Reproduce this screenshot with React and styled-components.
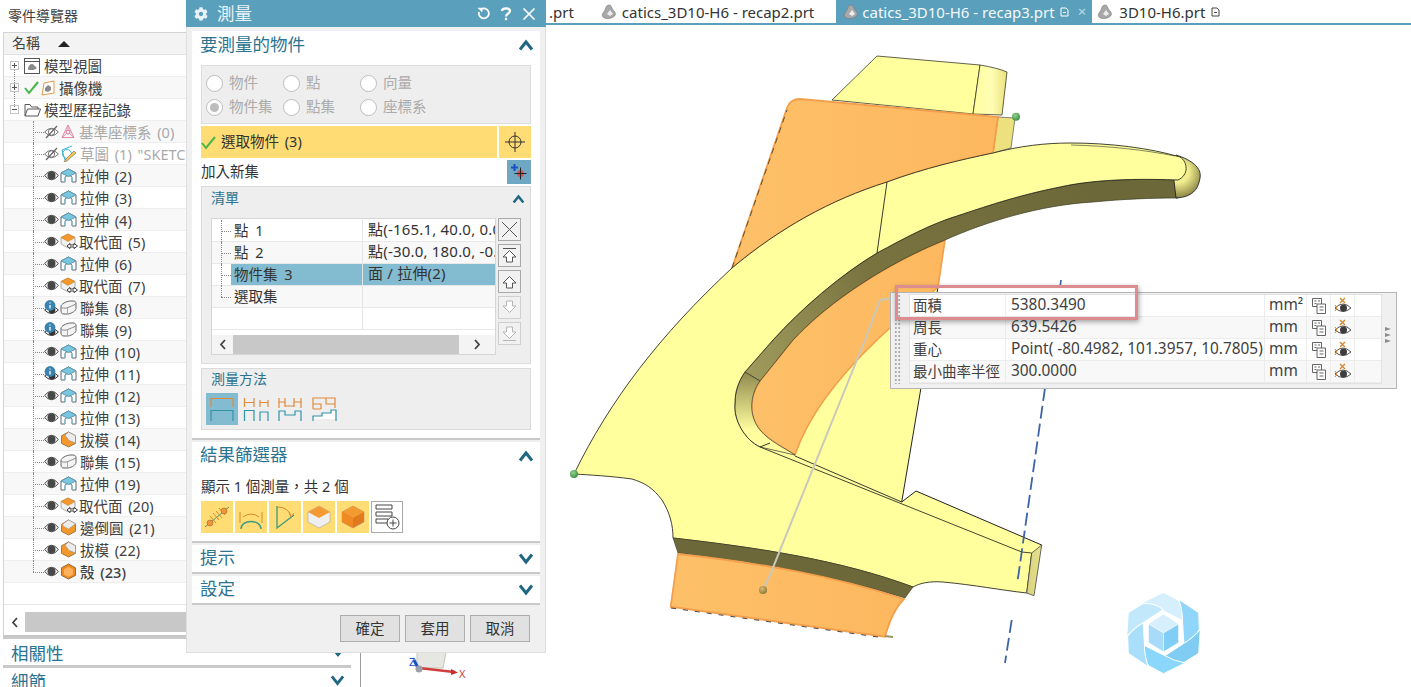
import React from 'react';
import styled, { createGlobalStyle } from 'styled-components';
import { FaCog } from 'react-icons/fa';

const TEAL = '#5a9fbc';
const HEAD = '#2b7390';
const SELECT = '#83bbd0';
const YELLOW = '#ffdc74';

const Global = createGlobalStyle`
  html, body { margin: 0; padding: 0; background: #fff; }
  body { font-family: "Noto Sans", "Noto Sans CJK TC", sans-serif; color: #404040; }
  * { box-sizing: border-box; }
`;

const Page = styled.div`
  position: relative;
  display: flex;
  width: 1411px;
  height: 687px;
  overflow: hidden;
  background: #fff;
`;

const Up = styled.span`
  display: block;
  padding-bottom: ${(p) => p.$by || 3}px;
`;

/* left navigator */
const Navigator = styled.div`
  display: flex;
  flex-direction: column;
  flex: none;
  width: 361px;
  height: 687px;
  overflow: hidden;
  border-right: 1px solid #9c9c9c;
`;
const NavTitle = styled.div`
  flex: none;
  height: 32px;
  padding-left: 8px;
  font-size: 14px;
  line-height: 31px;
`;
const TreePanel = styled.div`
  display: flex;
  flex-direction: column;
  flex: none;
  height: 604px;
  margin: 0 9px 0 3px;
  border: 1px solid #d4d4d4;
  border-bottom-color: #c4c4c4;
`;
const TreeHead = styled.div`
  display: flex;
  align-items: center;
  gap: 18px;
  flex: none;
  height: 22px;
  padding-left: 8px;
  font-size: 14px;
  background: #f3f3f3;
  border-bottom: 1px solid #e2e2e2;
`;
const SortUp = styled.span`
  width: 0;
  height: 0;
  border-left: 6px solid transparent;
  border-right: 6px solid transparent;
  border-bottom: 6px solid #222;
`;
const TreeRow = styled.div`
  display: flex;
  align-items: center;
  flex: none;
  height: 22px;
  padding-left: ${(p) => (p.$level ? 29 : 6)}px;
  font-size: 14.5px;
  word-spacing: 2px;
  white-space: nowrap;
  color: ${(p) => (p.$muted ? '#a9a9a9' : '#404040')};
  background: ${(p) => (p.$stripe ? '#f8f8f8' : '#fff')};
  border-bottom: 1px solid #eeeeee;
`;
const Connector = styled.span`
  position: relative;
  flex: none;
  align-self: stretch;
  width: ${(p) => p.$w || 11}px;
  &::before {
    content: '';
    position: absolute;
    left: 0;
    top: 0;
    bottom: ${(p) => (p.$last ? '50%' : '-1px')};
    border-left: 1px dotted #888;
  }
  &::after {
    content: '';
    position: absolute;
    left: 0;
    right: 0;
    top: 50%;
    border-top: 1px dotted #888;
  }
`;
const Expander = styled.span`
  position: relative;
  flex: none;
  width: 9px;
  height: 9px;
  margin-right: 5px;
  border: 1px solid #c4c4c4;
  background: linear-gradient(#555, #555) center / 5px 1px no-repeat,
    ${(p) => (p.$open ? 'none' : 'linear-gradient(#555, #555) center / 1px 5px no-repeat')};
  &::after {
    content: '';
    display: ${(p) => (p.$open ? 'none' : 'block')};
    position: absolute;
    left: 3px;
    top: 8px;
    height: 15px;
    border-left: 1px dotted #888;
  }
`;
const RowLabel = styled.span`
  margin-left: ${(p) => p.$gap ?? 4}px;
  padding-bottom: 1px;
  font-weight: ${(p) => (p.$bold ? 500 : 400)};
`;
const Spacer = styled.span`
  display: block;
  flex: none;
  width: ${(p) => p.$w}px;
  height: ${(p) => p.$h || 0}px;
`;
const EmptyRow = styled.div`
  flex: none;
  height: 22px;
  border-bottom: 1px solid #e8e8e8;
`;
const TreeScroll = styled.div`
  display: flex;
  align-items: stretch;
  flex: none;
  height: 20px;
  margin-top: 7px;
`;
const ScrollArrow = styled.span`
  display: flex;
  align-items: center;
  justify-content: center;
  flex: none;
  width: ${(p) => p.$w || 21}px;
  color: #444;
`;
const ScrollThumb = styled.span`
  flex: ${(p) => (p.$fill ? 1 : 'none')};
  width: ${(p) => p.$w || 0}px;
  background: #c8c8c8;
`;
const AccordionBar = styled.div`
  display: flex;
  align-items: center;
  justify-content: space-between;
  flex: none;
  height: ${(p) => p.$h}px;
  margin: 0 9px 0 3px;
  padding: 0 6px 0 8px;
  font-size: 17.5px;
  color: ${HEAD};
  border-top: 3px solid #c9c9c9;
`;

/* main area */
const Main = styled.div`
  display: flex;
  flex-direction: column;
  flex: 1;
  min-width: 0;
`;
const TabBar = styled.div`
  display: flex;
  align-items: stretch;
  flex: none;
  height: 25px;
  padding-left: 185px;
  font-size: 15px;
  border-bottom: 2px solid ${TEAL};
  white-space: nowrap;
`;
const Tab = styled.div`
  display: flex;
  align-items: center;
  gap: ${(p) => p.$gap ?? 6}px;
  padding: ${(p) => p.$pad};
  color: ${(p) => (p.$active ? '#f4f9fb' : '#333')};
  background: ${(p) => (p.$active ? TEAL : 'transparent')};
`;
const TabClose = styled.span`
  margin-left: 4px;
  font-size: 15px;
  line-height: 1;
  color: #b9dbe8;
`;
const Canvas = styled.div`
  position: relative;
  flex: 1;
`;
const ModelSvg = styled.svg`
  display: block;
`;

/* dialog */
const Dialog = styled.div`
  position: absolute;
  left: 186px;
  top: 0;
  display: flex;
  flex-direction: column;
  width: 360px;
  height: 653px;
  background: #f0f0f0;
  border: 1px solid #dedede;
  border-top: 0;
`;
const DialogTitle = styled.div`
  display: flex;
  align-items: center;
  flex: none;
  height: 27px;
  margin: 0 -1px;
  padding: 0 8px;
  color: #e9f3f7;
  background: ${TEAL};
`;
const TitleText = styled.span`
  flex: 1;
  margin-left: 9px;
  padding-bottom: 3px;
  font-size: 17.5px;
`;
const TitleIcons = styled.span`
  display: flex;
  align-items: center;
  gap: 9px;
  padding-right: 2px;
`;
const DialogBody = styled.div`
  display: flex;
  flex-direction: column;
  gap: 2px;
  padding: 4px 5px 0;
`;
const Section = styled.section`
  background: #fff;
  border-bottom: 2px solid #c9c9c9;
`;
const SectionHead = styled.div`
  display: flex;
  align-items: center;
  justify-content: space-between;
  height: ${(p) => p.$h || 27}px;
  padding: 0 6px 0 8px;
  font-size: 17.5px;
  color: ${HEAD};
`;
const SectionBody = styled.div`
  display: flex;
  flex-direction: column;
  gap: 2px;
  padding: ${(p) => p.$pad};
`;
const Group = styled.div`
  background: #eeeeee;
  border: 1px solid #dcdcdc;
  margin-top: ${(p) => p.$mt || 0}px;
`;
const RadioGrid = styled.div`
  display: grid;
  grid-template-columns: repeat(3, 77px);
  grid-auto-rows: 24px;
  align-items: center;
  height: 57px;
  padding: 5px 0 0 4px;
`;
const RadioItem = styled.label`
  display: flex;
  align-items: center;
  gap: 6px;
  font-size: 14.5px;
  color: #ababab;
`;
const RadioDot = styled.span`
  display: flex;
  align-items: center;
  justify-content: center;
  width: 17px;
  height: 17px;
  border-radius: 50%;
  background: #fff;
  border: 1px solid #bdbdbd;
  &::after {
    content: '';
    display: ${(p) => (p.$on ? 'block' : 'none')};
    width: 9px;
    height: 9px;
    border-radius: 50%;
    background: #bdbdbd;
  }
`;
const SelectRow = styled.div`
  display: flex;
  gap: 2px;
  height: 32px;
`;
const SelectBar = styled.div`
  display: flex;
  align-items: center;
  flex: 1;
  gap: 5px;
  font-size: 14.5px;
  word-spacing: 2px;
  color: #333;
  background: ${YELLOW};
`;
const SelectButton = styled.div`
  display: flex;
  align-items: center;
  justify-content: center;
  width: 32px;
  background: ${YELLOW};
`;
const NewSetRow = styled.div`
  display: flex;
  align-items: center;
  justify-content: space-between;
  height: 24px;
  font-size: 14.5px;
  color: #333;
`;
const NewSetButton = styled.div`
  display: flex;
  align-items: center;
  justify-content: center;
  width: 24px;
  height: 24px;
  background: #6fa8c2;
`;
const ListHead = styled.div`
  display: flex;
  align-items: center;
  justify-content: space-between;
  height: 23px;
  padding: 0 5px 0 9px;
  font-size: 14px;
  color: ${HEAD};
`;
const ListWrap = styled.div`
  display: flex;
  gap: 2px;
  height: 153px;
  padding: 8px 0 0 9px;
`;
const ListTable = styled.div`
  display: flex;
  flex-direction: column;
  width: 285px;
  height: 137px;
  background: #fff;
  border: 1px solid #d6d6d6;
  overflow: hidden;
`;
const ListRows = styled.div`
  flex: 1;
  overflow: hidden;
  padding-top: 1px;
`;
const ListRow = styled.div`
  display: flex;
  height: 22px;
  font-size: 14.5px;
  color: #333;
  background: ${(p) => (p.$stripe ? '#f8f8f8' : '#fff')};
  border-bottom: 1px solid #e8e8e8;
`;
const NameCell = styled.div`
  display: flex;
  flex: none;
  align-items: center;
  width: 150px;
  padding-left: 9px;
`;
const NameText = styled.span`
  flex: 1;
  align-self: stretch;
  display: flex;
  align-items: center;
  padding: 0 0 2px 3px;
  word-spacing: 3px;
  background: ${(p) => (p.$sel ? SELECT : 'transparent')};
`;
const ValueCell = styled.div`
  flex: 1;
  min-width: 0;
  padding-left: 5px;
  font-size: 15px;
  letter-spacing: 0.2px;
  line-height: 19px;
  overflow: hidden;
  white-space: nowrap;
  border-left: 1px solid #e4e4e4;
  background: ${(p) => (p.$sel ? SELECT : 'transparent')};
`;
const ListScroll = styled.div`
  display: flex;
  flex: none;
  height: 19px;
  background: #f4f4f4;
`;
const ToolColumn = styled.div`
  display: flex;
  flex-direction: column;
  gap: 3px;
`;
const ToolButton = styled.div`
  display: flex;
  align-items: center;
  justify-content: center;
  width: 23px;
  height: 23px;
  background: #f1f1f1;
  border: 1px solid ${(p) => (p.$off ? '#cfcfcf' : '#a9a9a9')};
`;
const MethodLabel = styled.div`
  padding-left: 9px;
  height: 24px;
  font-size: 14px;
  line-height: 20px;
  color: ${HEAD};
`;
const IconRow = styled.div`
  display: flex;
  gap: ${(p) => p.$gap}px;
  padding-left: ${(p) => p.$pl || 0}px;
`;
const IconCell = styled.div`
  display: flex;
  align-items: center;
  justify-content: center;
  width: 32px;
  height: 32px;
  background: ${(p) => p.$bg || 'transparent'};
  border: ${(p) => (p.$outlined ? '1px solid #a9a9a9' : '0')};
`;
const CountText = styled.div`
  height: 30px;
  padding-top: 7px;
  font-size: 14.5px;
  color: #333;
  line-height: 20px;
`;
const DialogFooter = styled.div`
  display: flex;
  justify-content: flex-end;
  gap: 5px;
  padding: 10px 15px 0 0;
`;
const FooterButton = styled.button`
  width: 60px;
  height: 27px;
  padding: 0 0 3px;
  font: inherit;
  font-size: 14.5px;
  color: #333;
  background: #e1e1e1;
  border: 1px solid #adadad;
`;

/* floating results */
const ResultPanel = styled.div`
  position: absolute;
  left: 890px;
  top: 292px;
  display: flex;
  width: 507px;
  height: 97px;
  padding: 1px 0 0 3px;
  background: #f0f0f0;
  border: 1px solid #b5b5b5;
`;
const Grip = styled.div`
  width: 7px;
  height: 90px;
  margin-right: 8px;
  background: radial-gradient(circle, #a9a9a9 1px, transparent 1.2px) 0 0 / 3.5px 4px;
`;
const ResultTable = styled.div`
  width: 473px;
  height: 90px;
  background: #fff;
  border: 1px solid #e2e2e2;
`;
const ResultRow = styled.div`
  display: grid;
  grid-template-columns: 96px 259px 42px 24px 24px 1fr;
  height: 22px;
  font-size: 15.4px;
  line-height: 19px;
  color: #404040;
  background: ${(p) => (p.$stripe ? '#f8f8f8' : '#fff')};
  border-bottom: 1px solid #ececec;
`;
const ResultCell = styled.div`
  display: flex;
  align-items: center;
  padding-left: ${(p) => p.$pl ?? 0}px;
  justify-content: ${(p) => (p.$center ? 'center' : 'flex-start')};
  border-right: 1px solid #ececec;
  white-space: nowrap;
  overflow: hidden;
`;
const NameLabel = styled.span`
  font-size: 14.5px;
`;
const MoreMarks = styled.div`
  display: flex;
  flex-direction: column;
  gap: 2px;
  margin: 33px 0 0 3px;
`;
const MoreMark = styled.span`
  width: 0;
  height: 0;
  border-top: 2px solid transparent;
  border-bottom: 2px solid transparent;
  border-left: 6px solid #8c8c8c;
`;
const Highlight = styled.div`
  position: absolute;
  left: 895px;
  top: 285px;
  width: 243px;
  height: 35px;
  border: 3px solid #dd8c90;
  box-shadow: 1px 2px 5px rgba(60, 60, 60, 0.45), inset 0 0 1px rgba(60, 60, 60, 0.25);
`;

/* drawn glyphs */
const Eye = ({ color = '#474747' }) => (
  <svg width="15" height="13" viewBox="0 0 15 13">
    <path d="M.6 6.5Q7.5-2 14.4 6.5 7.5 15 .6 6.5Z" fill="#fff" stroke={color} />
    <circle cx="7.5" cy="6.5" r="4" fill={color} />
  </svg>
);
const HiddenEye = () => (
  <svg width="15" height="14" viewBox="0 0 15 14">
    <path d="M.6 7Q7.5-.5 14.4 7 7.5 14.5.6 7Z" fill="#fff" stroke="#777" />
    <circle cx="7.5" cy="7" r="3.2" fill="none" stroke="#777" />
    <path d="M2 13 13 1" stroke="#666" strokeWidth="1.2" />
  </svg>
);
const InfoEye = () => (
  <svg width="15" height="16" viewBox="0 0 15 16">
    <path d="M.6 10Q7.5 3 14.4 10 7.5 17 .6 10Z" fill="#fff" stroke="#333" />
    <circle cx="8" cy="10" r="3.4" fill="#333" />
    <circle cx="6" cy="5.5" r="5.4" fill="#3a83ad" />
    <path d="M6 2.6v.9M6 5v3.4" stroke="#fff" strokeWidth="1.3" />
  </svg>
);
const Extrude = () => (
  <svg width="17" height="15" viewBox="0 0 17 15">
    <path d="M1 5 8.5 1 16 5v9h-4V9.5C12 7 5 7 5 9.5V14H1Z" fill="#fff" stroke="#5b6a70" />
    <path d="M1 5 8.5 1 16 5 8.5 8.5Z" fill="#79c6e0" stroke="#5b9ab0" />
    <path d="M1.5 6v3M15.5 6v3M5 9v5M12 9v5" stroke="#7ac3da" />
  </svg>
);
const Cube = () => (
  <svg width="17" height="17" viewBox="0 0 17 17">
    <path d="M8.5 1 15.5 4.8v7.6L8.5 16 1.5 12.4V4.8Z" fill="#f5982c" stroke="#8a6a40" strokeWidth=".8" />
    <path d="M8.5 1 15.5 4.8V12L9 9.5 5 4.2 8.5 1Z" fill="#ececec" stroke="#8a8a8a" strokeWidth=".6" />
  </svg>
);
const Unite = () => (
  <svg width="17" height="15" viewBox="0 0 17 15">
    <path d="M1 6.5C1 4 6 1.5 10 1h3c2 0 3 1 3 2.5v5c0 2-4 5-8 5.5H4c-2 0-3-1-3-3Z" fill="#f4f4f4" stroke="#666" />
    <path d="M1 6.5c0 2 5 2 7 1s8-3 8-4" fill="none" stroke="#888" />
    <path d="M7.5 8v6" stroke="#aaa" />
  </svg>
);
const ReplaceFace = () => (
  <svg width="20" height="17" viewBox="0 0 20 17">
    <path d="M8 1 15 4.5V11L8 15 1 11V4.5Z" fill="#f0f0f0" stroke="#8a8a8a" strokeWidth=".7" />
    <path d="M8 1 15 4.5 8 8.5 1 4.5Z" fill="#f5982c" stroke="#c77a20" strokeWidth=".5" />
    <path d="M7 13 10 10.5V12h4V10.5L17.5 13 14 15.6V14h-4v1.6Z" fill="#fff" stroke="#222" strokeWidth=".9" />
  </svg>
);
const Shell = () => (
  <svg width="17" height="17" viewBox="0 0 17 17">
    <path d="M8.5 1 15.5 4.8v7.6L8.5 16 1.5 12.4V4.8Z" fill="#f08a1e" stroke="#7a5a30" strokeWidth=".8" />
    <path d="M8.5 3.8 13 6.4v5L8.5 13.8 4 11.4v-5Z" fill="#ffb25e" />
  </svg>
);
const Blend = () => (
  <svg width="17" height="17" viewBox="0 0 17 17">
    <path d="M8.5 1 15.5 4.8v7.6L8.5 16 1.5 12.4V6.5C1.5 5.5 2 4.8 3 4.3Z" fill="#f5982c" stroke="#8a6a40" strokeWidth=".8" />
    <path d="M8.5 1 15.5 4.8 8.5 10 3 7Q2 5 4 4Z" fill="#ececec" stroke="#999" strokeWidth=".5" />
  </svg>
);
const Datum = () => (
  <svg width="16" height="15" viewBox="0 0 16 15" fill="none">
    <circle cx="8" cy="8" r="2" stroke="#d86a8a" />
    <path d="M8 1v5M6.5 9.5 2 13.5M9.5 9.5 14 13.5M2 13.5h12M8 1 2 13.5M8 1l6 12.5" stroke="#e08aa6" />
  </svg>
);
const Sketch = () => (
  <svg width="17" height="17" viewBox="0 0 17 17" fill="none">
    <path d="M2 5 12 1M2 5l3 10" stroke="#3fb0d6" />
    <circle cx="7" cy="9" r="4.5" stroke="#3fb0d6" />
    <path d="M5 15 14 6l2 2-9 8-3 1Z" fill="#f3c54c" stroke="#777" strokeWidth=".7" />
  </svg>
);
const ViewsIcon = () => (
  <svg width="16" height="16" viewBox="0 0 16 16">
    <rect x=".5" y=".5" width="15" height="15" fill="#fff" stroke="#555" />
    <path d="M.5 3.5h15" stroke="#555" />
    <path d="M4 11c0-3 2-5 4-5s2 2 4 3-1 3-4 3-4 0-4-1Z" fill="#8a8a8a" />
  </svg>
);
const CameraIcon = () => (
  <svg width="14" height="16" viewBox="0 0 14 16">
    <path d="M3 3 13 1v12L1 15Z" fill="#fff" stroke="#e29a4c" />
    <path d="M4 8l3-3 3 2v3l-3 2-3-1Z" fill="#8a8a8a" />
  </svg>
);
const FolderIcon = () => (
  <svg width="17" height="14" viewBox="0 0 17 14" fill="#fff" stroke="#555">
    <path d="M1 13V1.5h5L7.5 4H14v2" />
    <path d="M1 13 3.5 6h13L14 13Z" />
  </svg>
);
const Check = ({ size = 15, color = '#49b649' }) => (
  <svg width={size} height={size} viewBox="0 0 15 15" fill="none">
    <path d="M1 8l4 5L14 2" stroke={color} strokeWidth="2" />
  </svg>
);
const Chevron = ({ up, size = 16 }) => (
  <svg width={size} height={size * 0.75} viewBox="0 0 16 12" fill="none">
    <path d={up ? 'M2 10.5 8 3l6 7.5' : 'M2 1.5 8 9l6-7.5'} stroke="#1f6782" strokeWidth="3" />
  </svg>
);
const TabPart = ({ tight }) => (
  <svg width="16" height="16" viewBox="0 0 16 16" style={tight ? { marginRight: -2 } : undefined}>
    <path d="M8 1c3 0 2 3 5 6 2 2 2 5-1 6-3 2-8 2-10 0-2-3 1-5 2-7s1-5 4-5Z" fill="#a8a8a8" stroke="#777" strokeWidth=".6" />
    <path d="M6 10l3-4 3 4-3 2Z" fill="#eee" />
  </svg>
);
const TabDoc = ({ color }) => (
  <svg width="9" height="10" viewBox="0 0 9 10" fill="none" stroke={color}>
    <path d="M1 1h5l2 2v6H1Z" />
    <path d="M3 5.5h3" />
  </svg>
);
const ArrowUp = ({ color, bar }) => (
  <svg width="17" height="17" viewBox="0 0 17 17" fill="#fff" stroke={color}>
    {bar && <path d="M2 1.5h13" fill="none" />}
    <path d="M8.5 3.5 15 10h-3.5v5h-6v-5H2Z" />
  </svg>
);
const ArrowDown = ({ color, bar }) => (
  <svg width="17" height="17" viewBox="0 0 17 17" fill="#fff" stroke={color}>
    {bar && <path d="M2 15.5h13" fill="none" />}
    <path d="M8.5 13.5 15 7h-3.5V2h-6v5H2Z" />
  </svg>
);
const ScrollChevron = ({ right }) => (
  <svg width="8" height="11" viewBox="0 0 8 11" fill="none">
    <path d={right ? 'M2 1l4 4.5L2 10' : 'M6 1 2 5.5 6 10'} stroke="#444" strokeWidth="1.8" />
  </svg>
);
const Crosshair = () => (
  <svg width="22" height="22" viewBox="0 0 22 22" fill="none" stroke="#333">
    <circle cx="11" cy="11" r="6" />
    <path d="M11 1v20M1 11h20" />
  </svg>
);
const NewSetIcon = () => (
  <svg width="18" height="18" viewBox="0 0 18 18" fill="none">
    <path d="M1 4.5h7M4.5 1v7" stroke="#1c4fc4" strokeWidth="2" />
    <circle cx="10.5" cy="10.5" r="3.5" fill="#d8505a" />
    <path d="M10.5 4.5v12M4.5 10.5h12" stroke="#222" />
  </svg>
);
const MethodIcon = ({ kind }) => {
  const orange = {
    a: 'M5 14V5.5h22V14',
    b: 'M4.5 14V5M14 14V5M4.5 9.5H14M20 14V7M28 14V7M20 9.5h8',
    c: 'M5 15V5M27 15V5M5 9h6M11 5v9M20 5v9M11 13h9M20 9h7',
    d: 'M5 16V5h22v10M5 11h8v5M5 16h8M18 5v6h9',
  }[kind];
  const teal = {
    a: 'M5 28V17.5h22V28',
    b: 'M4.5 28V17.5h9.5V28M20 28V19h8V28',
    c: 'M5 28V18h6v4h10v-4h6v10',
    d: 'M5 28v-5h9v-3h9v-3h5v11',
  }[kind];
  return (
    <svg width="32" height="32" viewBox="0 0 32 32" fill="none" strokeWidth="1.2">
      {kind === 'd' && <path d="M14 20h9v-3h5v9H5v-3h9Z" fill="#fff" />}
      <path d={orange} stroke="#e08a3c" />
      <path d={teal} stroke="#2f93aa" />
    </svg>
  );
};
const FilterLine = () => (
  <svg width="32" height="32" viewBox="0 0 32 32" fill="none">
    <path d="M4 26 28 6" stroke="#3c9a80" />
    <path d="M9 15l6 7M12 12l6 7M15 10l6 7M18 7l6 7" stroke="#d88a2c" />
    <circle cx="9" cy="22" r="3" fill="#f0963a" stroke="#9a5a1a" strokeWidth=".5" />
    <circle cx="23" cy="10" r="3" fill="#f0963a" stroke="#9a5a1a" strokeWidth=".5" />
  </svg>
);
const FilterArc = () => (
  <svg width="32" height="32" viewBox="0 0 32 32" fill="none">
    <path d="M6 28C6 18 26 18 26 28" stroke="#3c9a80" strokeWidth="1.4" />
    <path d="M8 16q8-6 16 0M5 11v11M27 11v11" stroke="#d88a2c" />
  </svg>
);
const FilterAngle = () => (
  <svg width="32" height="32" viewBox="0 0 32 32" fill="none">
    <path d="M8 5v22L25 14" stroke="#3c9a80" strokeWidth="1.3" />
    <path d="M8 6q12 0 14 10M20 11l2 5 3-4" stroke="#d88a2c" />
  </svg>
);
const FilterCube = ({ plain }) => (
  <svg width="26" height="26" viewBox="0 0 26 26">
    <path d="M13 2 24 8v10l-11 6-11-6V8Z" fill={plain ? '#e07a1c' : '#efefef'} stroke="#999" strokeWidth=".5" />
    <path d="M13 2 24 8 13 14 2 8Z" fill="#f39a32" />
    {plain && <path d="M2 8 13 14v10L2 18Z" fill="#ef8a22" />}
  </svg>
);
const FilterList = () => (
  <svg width="30" height="30" viewBox="0 0 30 30" fill="none" stroke="#444">
    <path d="M4 3h16v4H4ZM4 10h16v4H4ZM4 17h12v4H4Z" />
    <circle cx="21" cy="21" r="6" fill="#fff" />
    <path d="M21 17.5v7M17.5 21h7" />
  </svg>
);
const SaveGlyph = () => (
  <svg width="14" height="16" viewBox="0 0 14 16" fill="#fff" stroke="#555" strokeWidth=".9">
    <path d="M.5.5h9v8h-9Z" />
    <path d="M5 6h8.5v9.5H5Z" />
    <path d="M2.5 3h2M6 3h2M2.5 5.5h2M7.5 9h4M7.5 12h4" />
  </svg>
);
const ShowGlyph = () => (
  <svg width="18" height="17" viewBox="0 0 18 17" fill="none">
    <path d="M6 1l5 5M11 1 6 6" stroke="#d8862c" strokeWidth="1.3" />
    <path d="M1 11Q9 3 17 11 9 18 1 11Z" fill="#fff" stroke="#555" />
    <circle cx="9.5" cy="11" r="3.5" fill="#3d3d3d" />
    <path d="M1 8l2 3-2 3" stroke="#d8862c" />
  </svg>
);

const iconFor = {
  extrude: <Extrude />,
  replace: <ReplaceFace />,
  unite: <Unite />,
  draft: <Cube />,
  blend: <Blend />,
  shell: <Shell />,
  datum: <Datum />,
  sketch: <Sketch />,
};

const features = [
  { label: '基準座標系 (0)', icon: 'datum', eye: 'off', muted: true },
  { label: '草圖 (1) "SKETCH_000"', icon: 'sketch', eye: 'off', muted: true },
  { label: '拉伸 (2)', icon: 'extrude' },
  { label: '拉伸 (3)', icon: 'extrude' },
  { label: '拉伸 (4)', icon: 'extrude' },
  { label: '取代面 (5)', icon: 'replace' },
  { label: '拉伸 (6)', icon: 'extrude' },
  { label: '取代面 (7)', icon: 'replace' },
  { label: '聯集 (8)', icon: 'unite', eye: 'info' },
  { label: '聯集 (9)', icon: 'unite', eye: 'info' },
  { label: '拉伸 (10)', icon: 'extrude' },
  { label: '拉伸 (11)', icon: 'extrude', eye: 'info' },
  { label: '拉伸 (12)', icon: 'extrude' },
  { label: '拉伸 (13)', icon: 'extrude' },
  { label: '拔模 (14)', icon: 'draft' },
  { label: '聯集 (15)', icon: 'unite' },
  { label: '拉伸 (19)', icon: 'extrude' },
  { label: '取代面 (20)', icon: 'replace' },
  { label: '邊倒圓 (21)', icon: 'blend' },
  { label: '拔模 (22)', icon: 'draft' },
  { label: '殼 (23)', icon: 'shell', bold: true },
];

const results = [
  { name: '面積', value: '5380.3490', unit: 'mm²' },
  { name: '周長', value: '639.5426', unit: 'mm' },
  { name: '重心', value: 'Point( -80.4982, 101.3957, 10.7805)', unit: 'mm' },
  { name: '最小曲率半徑', value: '300.0000', unit: 'mm' },
];

const listRows = [
  { name: '點 1', value: '點(-165.1, 40.0, 0.0)' },
  { name: '點 2', value: '點(-30.0, 180.0, -0.0)' },
  { name: '物件集 3', value: '面 / 拉伸(2)', sel: true },
  { name: '選取集', value: '' },
  { name: '', value: '' },
];

function NavigatorPane() {
  return (
    <Navigator>
      <NavTitle>零件導覽器</NavTitle>
      <TreePanel>
        <TreeHead><Up>名稱</Up><SortUp /></TreeHead>
        <TreeRow>
          <Expander />
          <ViewsIcon />
          <RowLabel>模型視圖</RowLabel>
        </TreeRow>
        <TreeRow $stripe>
          <Expander />
          <Check />
          <Spacer $w={2} />
          <CameraIcon />
          <RowLabel $gap={4}>攝像機</RowLabel>
        </TreeRow>
        <TreeRow>
          <Expander $open />
          <FolderIcon />
          <RowLabel $gap={3}>模型歷程記錄</RowLabel>
        </TreeRow>
        {features.map((f, i) => (
          <TreeRow key={f.label} $level={1} $stripe={i % 2 === 0} $muted={f.muted}>
            <Connector $last={i === features.length - 1} />
            {f.eye === 'off' ? <HiddenEye /> : f.eye === 'info' ? <InfoEye /> : <Eye />}
            <Spacer $w={1} />
            {iconFor[f.icon]}
            <RowLabel $gap={f.icon === 'replace' ? -1 : 3} $bold={f.bold}>{f.label}</RowLabel>
          </TreeRow>
        ))}
        <EmptyRow />
        <TreeScroll>
          <ScrollArrow><ScrollChevron /></ScrollArrow>
          <ScrollThumb $fill />
        </TreeScroll>
      </TreePanel>
      <AccordionBar $h={29}><span>相關性</span><Chevron size={14} /></AccordionBar>
      <AccordionBar $h={28}><span>細節</span><Chevron size={15} /></AccordionBar>
    </Navigator>
  );
}

function ModelCanvas() {
  return (
    <Canvas>
      <ModelSvg width="1050" height="662" viewBox="361 25 1050 662">
        <defs>
          <linearGradient id="bandGrad" gradientUnits="userSpaceOnUse" x1="1100" y1="190" x2="750" y2="380">
            <stop offset="0" stopColor="#6d6839" />
            <stop offset=".6" stopColor="#78733f" />
            <stop offset="1" stopColor="#a09b5c" />
          </linearGradient>
          <linearGradient id="filletGrad" x1="0" y1="0" x2="0" y2="1">
            <stop offset="0" stopColor="#8f8a4e" />
            <stop offset=".7" stopColor="#fffd9d" />
          </linearGradient>
          <radialGradient id="tipGrad" gradientUnits="userSpaceOnUse" cx="1178" cy="172" r="30">
            <stop offset=".35" stopColor="#f3ef8e" />
            <stop offset=".85" stopColor="#8c8748" />
            <stop offset="1" stopColor="#6d6839" />
          </radialGradient>
          <linearGradient id="bladeEnd" x1="0" y1="0" x2="1" y2="0">
            <stop offset="0" stopColor="#ffff9e" />
            <stop offset=".55" stopColor="#fffdb4" />
            <stop offset="1" stopColor="#e9e27c" />
          </linearGradient>
          <linearGradient id="orangeGrad" x1="0" y1="0" x2="1" y2="0">
            <stop offset="0" stopColor="#fdc068" />
            <stop offset="1" stopColor="#fdb85f" />
          </linearGradient>
          <linearGradient id="sideGrad" x1="0" y1="0" x2="1" y2="0">
            <stop offset="0" stopColor="#d8d180" />
            <stop offset="1" stopColor="#e8e18a" />
          </linearGradient>
          <radialGradient id="greenBall" cx=".4" cy=".35" r=".7">
            <stop offset="0" stopColor="#8fd48f" />
            <stop offset="1" stopColor="#3c8a3c" />
          </radialGradient>
          <radialGradient id="goldBall" cx=".4" cy=".35" r=".7">
            <stop offset="0" stopColor="#d6bc78" />
            <stop offset="1" stopColor="#8a7436" />
          </radialGradient>
        </defs>

        {/* rear blade */}
        <path d="M877 56 980 65 973 114 832 100Z" fill="#ffff9e" stroke="#3a3a2a" strokeWidth=".8" />
        <path d="M980 65Q998 68 1007 72L1002 115 973 114Z" fill="url(#bladeEnd)" stroke="#3a3a2a" strokeWidth=".8" />
        <path d="M998 117 1015 118 1011 148 993 153Z" fill="#ece07f" stroke="#555" strokeWidth=".7" />
        <path
          d="M787 108Q790 99 800 99L998 117 993 153C960 160 925 168 887 182 830 200 780 228 732 268Z"
          fill="url(#orangeGrad)" stroke="#f29e4a" strokeWidth="1.8"
        />
        <path d="M732 268 787 110" fill="none" stroke="#3a3a2a" strokeWidth=".8" strokeDasharray="6 5" />

        {/* web behind arch */}
        <path d="M945 240 901.7 502 916 491 1041.7 545 1031.7 553 1021.7 552 760 447 800 380Z" fill="#ffff9e" />
        <path d="M938 287 901.7 502 916 491 1041.7 545" fill="none" stroke="#222" strokeWidth="1" />
        <path d="M795 456 901.7 502" stroke="#222" strokeWidth=".9" />

        {/* orange wall under arch */}
        <path
          d="M945 240C890 262 830 300 793 340L760 381C750 395 748 415 760 430 770 442 785 448 795 455 805 425 830 385 877 340 895 322 920 305 938 287Z"
          fill="url(#orangeGrad)" stroke="#f29e4a" strokeWidth="1.6"
        />

        {/* inner wall band and tip */}
        <path
          d="M1178 180C1150 179 1100 178 1060 187 1020 195 990 205 960 215 930 224 905 238 877 253 840 275 800 310 773 340L745 372 760 381 793 340C830 300 890 262 945 240 985 222 1040 205 1093 202 1125 199 1150 198 1178 198Z"
          fill="url(#bandGrad)" stroke="#3a3a20" strokeWidth=".7"
        />
        <path
          d="M745 372 760 381C750 395 748 415 760 430 770 442 785 448 795 455L760 447C745 440 733 420 735 403 735 392 738 382 745 372Z"
          fill="url(#filletGrad)" stroke="#333" strokeWidth=".7"
        />
        <path
          d="M1176 155C1192 160 1202 168 1200 178 1198 190 1192 197 1176 198L1174 181Z"
          fill="url(#tipGrad)" stroke="#222" strokeWidth=".9"
        />

        {/* front face */}
        <path
          d="M574 474C610 400 660 335 732 268 780 228 830 200 887 182 925 168 960 160 993 153 1020 146 1045 143 1070 143 1110 143 1150 148 1180 157 1188 162 1189 175 1178 180 1150 179 1100 178 1060 187 1020 195 990 205 960 215 930 224 905 238 877 253 840 275 800 310 773 340L745 372C738 382 735 392 735 403 733 420 745 440 760 447L1021.7 552 1031.7 553 1026.7 593C1000 590 975 585 943 582 930 581 920 583 913 587 840 560 760 548 673 538 673 525 670 513 662 500 653 488 645 483 632 479 610 476 590 475 574 474Z"
          fill="#ffff9e" stroke="#2e2e20" strokeWidth=".9"
        />
        <path d="M1071 145C1110 146 1145 150 1175 156" fill="none" stroke="#333" strokeWidth=".6" />
        <path d="M887 182 877 253M770 443 760 447" stroke="#222" strokeWidth=".9" />
        <path d="M1041.7 545 1031.7 553 1026.7 593 1034 595.7Z" fill="url(#sideGrad)" stroke="#444" strokeWidth=".8" />

        {/* lower band and lower orange face */}
        <path d="M673 538C760 548 840 560 913 587L905 598C830 575 760 563 678 553Z" fill="#6d6839" stroke="#3a3a20" strokeWidth=".6" />
        <path
          d="M678 554C760 563 830 575 904 599 896 607 889 622 885 636.7L670.7 606.7Z"
          fill="url(#orangeGrad)" stroke="#f39f4b" strokeWidth="1.8"
        />
        <path d="M671 608 885 638" stroke="#333" strokeWidth=".9" strokeDasharray="5 7" />
        <path d="M885 636 893 637" stroke="#9a9464" strokeWidth="2" />

        {/* leader and points */}
        <path d="M763 590 770 575 865 340 880 300 893 298" fill="none" stroke="#c9c8bd" strokeWidth="2" />
        <circle cx="763" cy="590" r="4" fill="url(#goldBall)" />
        <circle cx="574" cy="474" r="4" fill="url(#greenBall)" />
        <circle cx="1016" cy="116.7" r="4" fill="url(#greenBall)" />

        {/* datum axis */}
        <path d="M1061 280 1060 288" stroke="#3c64a8" strokeWidth="1.6" />
        <path d="M1045 388 1017.3 583" stroke="#3c64a8" strokeWidth="1.8" strokeDasharray="13 5" />
        <path d="M1011.7 620 1005 663" stroke="#3c64a8" strokeWidth="1.8" strokeDasharray="13 5" />

        {/* view triad */}
        <path d="M417 652h29l-3 16h-26Z" fill="#e6e6e2" stroke="#bfc9b0" />
        <path d="M419 668 454 672" stroke="#d23c3c" strokeWidth="2.4" />
        <path d="M451 669 458 672.5 451 675Z" fill="#c82c2c" />
        <path d="M418 668 414 660" stroke="#2050c8" strokeWidth="3" />
        <circle cx="419" cy="669" r="3.5" fill="#9aa0a8" />
        <text x="409" y="666" fontSize="11" fill="#2050c8">Z</text>
        <text x="459" y="678" fontSize="11" fill="#d23c3c">X</text>

        {/* watermark logo */}
        <g transform="translate(1163.5 633)" stroke="#fff" strokeWidth="1">
          {['#d6effd', '#8fd6fa', '#80ccf3', '#8ad7fb', '#a9dffa', '#c2e8fc'].map((c, i) => (
            <path
              key={c}
              transform={`rotate(${i * 60})`}
              d="M-21.7-30 0-40.7 15-32.7Q22-22 20-12L0-22Q-10-28-21.7-30Z"
              fill={c}
            />
          ))}
          <path d="M0-19 15-9 0 0-15-9Z" fill="#d7effd" strokeWidth=".5" />
          <path d="M-15-9 0 0V18.7L-15 9.7Z" fill="#a8dbfa" strokeWidth=".5" />
          <path d="M15-9 0 0V18.7L15 9.7Z" fill="#80cdf6" strokeWidth=".5" />
        </g>
      </ModelSvg>
    </Canvas>
  );
}

function MeasureDialog() {
  return (
    <Dialog>
      <DialogTitle>
        <FaCog size={14} />
        <TitleText>測量</TitleText>
        <TitleIcons>
          <svg width="13" height="13" viewBox="0 0 13 13" fill="none" stroke="#fff" strokeWidth="1.8">
            <path d="M4 2.2A5 5 0 1 1 2 5" />
            <path d="M1 1l4.5.2-.5 3.8Z" fill="#fff" strokeWidth=".5" />
          </svg>
          <svg width="14" height="15" viewBox="0 0 14 15" fill="none" stroke="#fff" strokeWidth="2.2">
            <path d="M3 5C3 1.5 11 1.5 11 5 11 7.5 7 7.5 7 10.5" />
            <path d="M7 11.8v2.4" />
          </svg>
          <svg width="14" height="14" viewBox="0 0 14 14" stroke="#fff" strokeWidth="1.7">
            <path d="M1.5 1.5 12.5 12.5M12.5 1.5 1.5 12.5" />
          </svg>
        </TitleIcons>
      </DialogTitle>
      <DialogBody>
        <Section>
          <SectionHead $h={28}><Up $by={4}>要測量的物件</Up><Chevron up /></SectionHead>
          <SectionBody $pad="6px 9px 8px">
            <Group>
              <RadioGrid>
                <RadioItem><RadioDot /><Up>物件</Up></RadioItem>
                <RadioItem><RadioDot /><Up>點</Up></RadioItem>
                <RadioItem><RadioDot /><Up>向量</Up></RadioItem>
                <RadioItem><RadioDot $on /><Up>物件集</Up></RadioItem>
                <RadioItem><RadioDot /><Up>點集</Up></RadioItem>
                <RadioItem><RadioDot /><Up>座標系</Up></RadioItem>
              </RadioGrid>
            </Group>
            <SelectRow>
              <SelectBar><Check size={15} /><Up>選取物件 (3)</Up></SelectBar>
              <SelectButton><Crosshair /></SelectButton>
            </SelectRow>
            <NewSetRow>
              <Up>加入新集</Up>
              <NewSetButton><NewSetIcon /></NewSetButton>
            </NewSetRow>
            <Group>
              <ListHead><Up>清單</Up><Chevron up size={13} /></ListHead>
              <ListWrap>
                <ListTable>
                  <ListRows>
                    {listRows.map((r, i) => (
                      <ListRow key={i} $stripe={i % 2 === 1}>
                        <NameCell>
                          {i < 4 && <Connector $w={10} $last={i === 3} />}
                          <NameText $sel={r.sel}>{r.name}</NameText>
                        </NameCell>
                        <ValueCell $sel={r.sel}>{r.value}</ValueCell>
                      </ListRow>
                    ))}
                  </ListRows>
                  <ListScroll>
                    <ScrollArrow><ScrollChevron /></ScrollArrow>
                    <ScrollThumb $w={226} />
                    <ScrollArrow $w={36}><ScrollChevron right /></ScrollArrow>
                  </ListScroll>
                </ListTable>
                <ToolColumn>
                  <ToolButton>
                    <svg width="19" height="19" viewBox="0 0 19 19" stroke="#555">
                      <path d="M2 2 17 17M17 2 2 17" />
                    </svg>
                  </ToolButton>
                  <ToolButton><ArrowUp color="#555" bar /></ToolButton>
                  <ToolButton><ArrowUp color="#555" /></ToolButton>
                  <ToolButton $off><ArrowDown color="#b5b5b5" /></ToolButton>
                  <ToolButton $off><ArrowDown color="#b5b5b5" bar /></ToolButton>
                </ToolColumn>
              </ListWrap>
            </Group>
            <Group $mt={2}>
              <MethodLabel>測量方法</MethodLabel>
              <IconRow $gap={2} $pl={4}>
                <IconCell $bg={SELECT}><MethodIcon kind="a" /></IconCell>
                <IconCell><MethodIcon kind="b" /></IconCell>
                <IconCell><MethodIcon kind="c" /></IconCell>
                <IconCell><MethodIcon kind="d" /></IconCell>
              </IconRow>
              <Spacer $w={1} $h={4} />
            </Group>
          </SectionBody>
        </Section>
        <Section>
          <SectionHead><Up $by={4}>結果篩選器</Up><Chevron up /></SectionHead>
          <SectionBody $pad="0 9px 8px">
            <CountText>顯示 1 個測量，共 2 個</CountText>
            <IconRow $gap={2}>
              <IconCell $bg={YELLOW}><FilterLine /></IconCell>
              <IconCell $bg={YELLOW}><FilterArc /></IconCell>
              <IconCell $bg={YELLOW}><FilterAngle /></IconCell>
              <IconCell $bg={YELLOW}><FilterCube /></IconCell>
              <IconCell $bg={YELLOW}><FilterCube plain /></IconCell>
              <IconCell $outlined><FilterList /></IconCell>
            </IconRow>
          </SectionBody>
        </Section>
        <Section><SectionHead><Up $by={4}>提示</Up><Chevron /></SectionHead></Section>
        <Section><SectionHead><Up $by={4}>設定</Up><Chevron /></SectionHead></Section>
      </DialogBody>
      <DialogFooter>
        <FooterButton>確定</FooterButton>
        <FooterButton>套用</FooterButton>
        <FooterButton>取消</FooterButton>
      </DialogFooter>
    </Dialog>
  );
}

function Results() {
  return (
    <>
      <ResultPanel>
        <Grip />
        <ResultTable>
          {results.map((r, i) => (
            <ResultRow key={r.name} $stripe={i % 2 === 1}>
              <ResultCell $pl={3}><NameLabel>{r.name}</NameLabel></ResultCell>
              <ResultCell $pl={5}><Up $by={2}>{r.value}</Up></ResultCell>
              <ResultCell $pl={4}><Up $by={2}>{r.unit}</Up></ResultCell>
              <ResultCell $center><SaveGlyph /></ResultCell>
              <ResultCell $center><ShowGlyph /></ResultCell>
              <div />
            </ResultRow>
          ))}
        </ResultTable>
        <MoreMarks>
          <MoreMark />
          <MoreMark />
          <MoreMark />
        </MoreMarks>
      </ResultPanel>
      <Highlight />
    </>
  );
}

export default function App() {
  return (
    <>
      <Global />
      <Page>
        <NavigatorPane />
        <Main>
          <TabBar>
            <Tab $pad="0 17px 0 3px">.prt</Tab>
            <Tab $pad="0 22px 0 10px" $gap={5}><TabPart />catics_3D10-H6 - recap2.prt</Tab>
            <Tab $active $pad="0 6px 0 7px" $gap={5}>
              <TabPart tight />
              catics_3D10-H6 - recap3.prt
              <TabDoc color="#fff" />
              <TabClose>×</TabClose>
            </Tab>
            <Tab $pad="0 0 0 5px" $gap={6}><TabPart />3D10-H6.prt<TabDoc color="#444" /></Tab>
          </TabBar>
          <ModelCanvas />
        </Main>
        <MeasureDialog />
        <Results />
      </Page>
    </>
  );
}
